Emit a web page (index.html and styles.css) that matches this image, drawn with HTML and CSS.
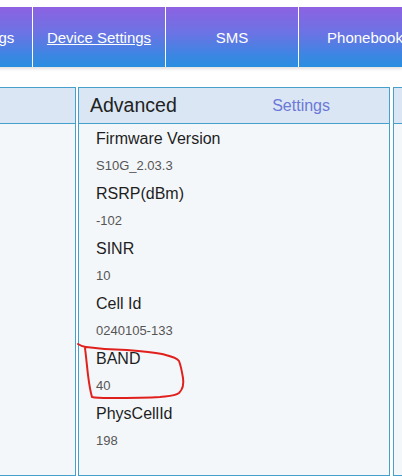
FILE: index.html
```html
<!DOCTYPE html>
<html>
<head>
<meta charset="utf-8">
<link rel="stylesheet" href="styles.css">
</head>
<body>
<div class="page">
  <nav class="nav">
    <div class="tab">Quick Settings</div>
    <div class="tab"><a class="link">Device Settings</a></div>
    <div class="tab">SMS</div>
    <div class="tab">Phonebook</div>
  </nav>
  <div class="panels">
    <section class="panel panel-left">
      <div class="panel-head"></div>
      <div class="panel-body"></div>
    </section>
    <section class="panel panel-mid">
      <div class="panel-head">
        <span class="title">Advanced</span>
        <span class="more">Settings</span>
      </div>
      <div class="panel-body list">
        <div class="label">Firmware Version</div>
        <div class="value">S10G_2.03.3</div>
        <div class="label">RSRP(dBm)</div>
        <div class="value">-102</div>
        <div class="label">SINR</div>
        <div class="value">10</div>
        <div class="label">Cell Id</div>
        <div class="value">0240105-133</div>
        <div class="label">BAND</div>
        <div class="value">40</div>
        <div class="label">PhysCellId</div>
        <div class="value">198</div>
      </div>
    </section>
    <section class="panel panel-right">
      <div class="panel-head"></div>
      <div class="panel-body"></div>
    </section>
  </div>
  <svg class="mark" width="402" height="476" viewBox="0 0 402 476">
    <path d="M78 344 C81 346 83 347 86 347 C100 349 115 350 127 350 C140 351 152 352 162 354 C170 356 176 357 179 361 C181 366 182 372 183 378 C184 384 183 389 179 393 C175 396 168 396 160 397 C145 398 125 398 110 398 C102 398 96 398 92 397 C90 390 89 383 88 375 C87 366 86 356 85 348" fill="none" stroke="#e0201c" stroke-width="2" stroke-linecap="round"/>
  </svg>
</div>
</body>
</html>
```
FILE: styles.css
```css
html, body {
  margin: 0;
  padding: 0;
  background: #ffffff;
}
.page {
  position: relative;
  width: 402px;
  height: 476px;
  overflow: hidden;
  font-family: "Liberation Sans", Arial, sans-serif;
}
.nav {
  display: flex;
  margin-top: 7px;
  margin-left: -100px;
  height: 60px;
  background: linear-gradient(to bottom, #8d62e2 0%, #6a74e4 45%, #3c86e2 80%, #2a8fe0 100%);
  box-shadow: 0 2px 3px rgba(0, 0, 0, 0.12);
}
.tab {
  flex: 0 0 132px;
  display: flex;
  align-items: center;
  justify-content: center;
  color: #ffffff;
  font-size: 15px;
  border-right: 1px solid #ffffff;
  white-space: nowrap;
}
.link {
  color: #ffffff;
  text-decoration: underline;
}
.panels {
  display: flex;
  margin-top: 20px;
  margin-left: -100px;
  height: 389px;
}
.panel {
  box-sizing: border-box;
  border: 1px solid #45a0cc;
  background: #f4f7fa;
  display: flex;
  flex-direction: column;
  flex: 0 0 auto;
}
.panel-left {
  width: 176px;
  margin-right: 2px;
}
.panel-mid {
  width: 312px;
  margin-right: 3px;
}
.panel-right {
  width: 200px;
}
.panel-head {
  height: 35px;
  background: #dae6f3;
  border-bottom: 1px solid #45a0cc;
  display: flex;
  align-items: center;
  justify-content: space-between;
  padding: 0 59px 0 11px;
}
.title {
  font-size: 19.5px;
  color: #222222;
}
.more {
  font-size: 16px;
  color: #6b78d8;
}
.list {
  padding: 1px 0 0 17px;
}
.label {
  height: 27px;
  line-height: 27px;
  font-size: 16px;
  color: #1e1e1e;
}
.value {
  height: 28px;
  line-height: 28px;
  font-size: 13px;
  color: #555555;
}
.mark {
  position: absolute;
  left: 0;
  top: 0;
  pointer-events: none;
}
```
